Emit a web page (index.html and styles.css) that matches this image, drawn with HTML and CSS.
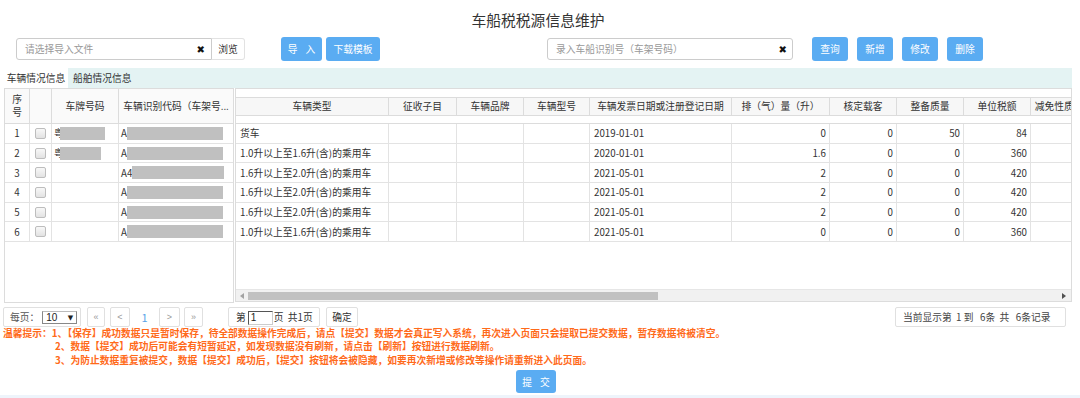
FILE: index.html
```html
<!DOCTYPE html>
<html lang="zh-CN">
<head>
    <meta charset="UTF-8">
    <meta name="viewport" content="width=device-width, initial-scale=1.0">
    <title>车船税税源信息维护</title>
    <link rel="stylesheet" href="styles.css">
</head>
<body>
    <div class="page">
        <h1 class="title">车船税税源信息维护</h1>

        <div class="toolbar">
            <div class="file-box">
                <div class="field file-field">
                    <span class="placeholder">请选择导入文件</span>
                    <span class="clear">&#10006;</span>
                </div>
                <span class="browse">浏览</span>
            </div>
            <button class="btn btn-import">导 入</button>
            <button class="btn btn-template">下载模板</button>

            <div class="field search-field">
                <span class="placeholder">录入车船识别号（车架号码）</span>
                <span class="clear">&#10006;</span>
            </div>
            <button class="btn btn-action btn-first">查询</button>
            <button class="btn btn-action">新增</button>
            <button class="btn btn-action">修改</button>
            <button class="btn btn-action">删除</button>
        </div>

        <div class="tabs">
            <span class="tab active">车辆情况信息</span>
            <span class="tab">船舶情况信息</span>
        </div>

        <div class="grid">
            <!-- frozen columns -->
            <div class="frozen">
                <div class="frozen-head">
                    <div class="hcell seq">序<br>号</div>
                    <div class="hcell"></div>
                    <div class="hcell">车牌号码</div>
                    <div class="hcell last">车辆识别代码（车架号...</div>
                </div>
                <div class="frozen-body">
                    <div class="cell seq">1</div>
                    <div class="cell"><span class="check"></span></div>
                    <div class="cell plate"><span class="cut">粤</span><span class="mask mask-plate1"></span></div>
                    <div class="cell vin last"><span class="cut">A</span><span class="mask"></span></div>

                    <div class="cell seq">2</div>
                    <div class="cell"><span class="check"></span></div>
                    <div class="cell plate"><span class="cut">粤</span><span class="mask mask-plate2"></span></div>
                    <div class="cell vin last"><span class="cut">A</span><span class="mask"></span></div>

                    <div class="cell seq">3</div>
                    <div class="cell"><span class="check"></span></div>
                    <div class="cell plate"></div>
                    <div class="cell vin last"><span class="cut">A4</span><span class="mask mask-short"></span></div>

                    <div class="cell seq">4</div>
                    <div class="cell"><span class="check"></span></div>
                    <div class="cell plate"></div>
                    <div class="cell vin last"><span class="cut">A</span><span class="mask"></span></div>

                    <div class="cell seq">5</div>
                    <div class="cell"><span class="check"></span></div>
                    <div class="cell plate"></div>
                    <div class="cell vin last"><span class="cut">A</span><span class="mask"></span></div>

                    <div class="cell seq">6</div>
                    <div class="cell"><span class="check"></span></div>
                    <div class="cell plate"></div>
                    <div class="cell vin last"><span class="cut">A</span><span class="mask"></span></div>
                </div>
            </div>

            <!-- scrolling columns -->
            <div class="main">
                <div class="main-inner">
                    <div class="main-head">
                        <div class="hcell">车辆类型</div>
                        <div class="hcell">征收子目</div>
                        <div class="hcell">车辆品牌</div>
                        <div class="hcell">车辆型号</div>
                        <div class="hcell">车辆发票日期或注册登记日期</div>
                        <div class="hcell">排（气）量（升）</div>
                        <div class="hcell">核定载客</div>
                        <div class="hcell">整备质量</div>
                        <div class="hcell">单位税额</div>
                        <div class="hcell">减免性质代码</div>
                    </div>
                    <div class="main-body" id="main-body"></div>
                </div>
                <div class="hscroll">
                    <span class="arrow-left"></span>
                    <span class="thumb"></span>
                    <span class="arrow-right"></span>
                </div>
            </div>
        </div>

        <div class="pager">
            <div class="box per-page">每页：<span class="select">10<span class="caret">&#9660;</span></span></div>
            <span class="box nav nav-first">&laquo;</span>
            <span class="box nav nav-prev">&lt;</span>
            <span class="current">1</span>
            <span class="box nav nav-next">&gt;</span>
            <span class="box nav nav-last">&raquo;</span>
            <div class="box goto">第<span class="page-input">1</span>页&nbsp;&nbsp;共1页</div>
            <span class="box confirm">确定</span>
            <div class="box info">当前显示第&nbsp;&nbsp;1 到&nbsp;&nbsp;&nbsp;6条&nbsp;&nbsp;共&nbsp;&nbsp;&nbsp;6条记录</div>
        </div>

        <div class="notice">
            <p>温馨提示：1、【保存】成功数据只是暂时保存，待全部数据操作完成后，请点【提交】数据才会真正写入系统，再次进入页面只会提取已提交数据，暂存数据将被清空。</p>
            <p class="indent">2、数据【提交】成功后可能会有短暂延迟，如发现数据没有刷新，请点击【刷新】按钮进行数据刷新。</p>
            <p class="indent">3、为防止数据重复被提交，数据【提交】成功后，【提交】按钮将会被隐藏，如要再次新增或修改等操作请重新进入此页面。</p>
        </div>

        <div class="submit-row">
            <button class="btn btn-submit">提 交</button>
        </div>
        <div class="footer-strip"></div>
    </div>

    <script>
        var rows = [
            ['货车', '2019-01-01', '0', '0', '50', '84'],
            ['1.0升以上至1.6升(含)的乘用车', '2020-01-01', '1.6', '0', '0', '360'],
            ['1.6升以上至2.0升(含)的乘用车', '2021-05-01', '2', '0', '0', '420'],
            ['1.6升以上至2.0升(含)的乘用车', '2021-05-01', '2', '0', '0', '420'],
            ['1.6升以上至2.0升(含)的乘用车', '2021-05-01', '2', '0', '0', '420'],
            ['1.0升以上至1.6升(含)的乘用车', '2021-05-01', '0', '0', '0', '360']
        ];
        var body = document.getElementById('main-body');
        var html = '';
        rows.forEach(function(r) {
            html += '<div class="cell">' + r[0] + '</div>';
            html += '<div class="cell"></div><div class="cell"></div><div class="cell"></div>';
            html += '<div class="cell">' + r[1] + '</div>';
            html += '<div class="cell num">' + r[2] + '</div>';
            html += '<div class="cell num">' + r[3] + '</div>';
            html += '<div class="cell num">' + r[4] + '</div>';
            html += '<div class="cell num">' + r[5] + '</div>';
            html += '<div class="cell"></div>';
        });
        body.innerHTML = html;
    </script>
</body>
</html>
```

FILE: styles.css
```css
* {
    box-sizing: border-box;
}
body {
    margin: 0;
    background-color: #fff;
    font-family: "Noto Sans CJK SC", "Noto Sans", sans-serif;
    font-size: 9.75px;
    color: #333;
}
.page {
    width: 1080px;
    height: 398px;
    overflow: hidden;
}
.title {
    margin: 0;
    height: 37px;
    padding: 10px 4px 0 0;
    line-height: 20px;
    font-size: 14.8px;
    font-weight: normal;
    text-align: center;
    color: #333;
}

/* toolbar */
.toolbar {
    display: flex;
    align-items: center;
    height: 24px;
    padding-left: 16px;
}
.file-box {
    display: flex;
    width: 229px;
    height: 22px;
}
.field {
    display: flex;
    align-items: center;
    height: 22px;
    padding-left: 8px;
    border: 1px solid #ccc;
    border-radius: 3px;
    background: #fff;
}
.placeholder {
    color: #999;
}
.clear {
    margin-left: auto;
    font-family: "DejaVu Sans", sans-serif;
    font-size: 10px;
    color: #111;
}
.file-field {
    width: 196px;
    border-radius: 3px 0 0 3px;
}
.file-field .clear {
    margin-right: 6px;
}
.browse {
    display: flex;
    align-items: center;
    justify-content: center;
    width: 33px;
    border: 1px solid #e2e2e2;
    border-left: none;
    border-radius: 0 3px 3px 0;
    color: #333;
}
.search-field {
    width: 246px;
    margin-left: 167px;
}
.search-field .clear {
    margin-right: 5px;
}
.btn {
    height: 24px;
    padding: 0;
    border: none;
    border-radius: 3px;
    background-color: #5aacf2;
    color: #fff;
    font-family: inherit;
    font-size: 9.75px;
}
.btn-import {
    width: 41px;
    margin-left: 36px;
    letter-spacing: 3px;
    text-indent: 3px;
}
.btn-template {
    width: 54px;
    margin-left: 4px;
}
.btn-action {
    width: 36px;
    margin-left: 9px;
}
.btn-first {
    margin-left: 19px;
}

/* tabs */
.tabs {
    display: flex;
    height: 20px;
    margin: 7px 8px 0 4px;
    background-color: #e4f3f3;
    line-height: 20px;
}
.tab {
    color: #333;
}
.tab.active {
    width: 64px;
    background-color: #fff;
    text-align: center;
}
.tab + .tab {
    margin-left: 5px;
}

/* grid */
.grid {
    display: flex;
    padding-left: 4px;
}
.frozen {
    width: 230px;
    height: 215px;
    border: 1px solid #dcdcdc;
}
.frozen-head,
.frozen-body {
    display: grid;
    grid-template-columns: 25px 22px 67px 114px;
}
.frozen-head {
    height: 35px;
    background-color: #fafafa;
    border-bottom: 1px solid #dcdcdc;
}
.frozen-body {
    grid-auto-rows: 19.7px;
}
.hcell {
    display: flex;
    align-items: center;
    justify-content: center;
    border-right: 1px solid #dcdcdc;
    white-space: nowrap;
    overflow: hidden;
    text-align: center;
    line-height: 13px;
}
.hcell.last,
.cell.last {
    border-right: none;
}
.cell {
    display: flex;
    align-items: center;
    padding-left: 4px;
    border-right: 1px solid #e3e3e3;
    border-bottom: 1px solid #e3e3e3;
    white-space: nowrap;
    overflow: hidden;
}
.cell.seq {
    justify-content: center;
    padding-left: 0;
}
.frozen-body .cell:nth-child(4n+2) {
    justify-content: center;
    padding-left: 0;
}
.check {
    width: 11px;
    height: 11px;
    border: 1px solid #bdbdbd;
    border-radius: 2px;
    background: linear-gradient(#f8f8f8, #e2e2e2);
}
.cut {
    flex: none;
}
.plate,
.vin {
    padding-left: 2px;
}
.mask {
    position: relative;
    width: 96px;
    height: 13px;
    background-color: #c0c0c0;
}
.mask-short {
    width: 92px;
}
.plate .mask {
    margin-left: -4px;
}
.mask-plate1 {
    width: 45px;
}
.mask-plate2 {
    width: 41px;
}

.main {
    position: relative;
    width: 837px;
    height: 214px;
    margin-left: 1px;
    border: 1px solid #dcdcdc;
    overflow: hidden;
}
.main-inner {
    width: 862px;
    padding-top: 8px;
}
.main-head,
.main-body {
    display: grid;
    grid-template-columns: 153px 68px 67px 66px 142px 98px 67px 67px 67px 67px;
}
.main-head {
    height: 19px;
    border-top: 1px solid #dcdcdc;
    border-bottom: 1px solid #dcdcdc;
    background-color: #f7f7f7;
}
.main-body {
    margin-top: 7px;
    border-top: 1px solid #dcdcdc;
    grid-auto-rows: 19.7px;
}
.cell.num {
    justify-content: flex-end;
    padding-left: 0;
    padding-right: 3px;
}
.hscroll {
    position: absolute;
    left: 0;
    right: 0;
    bottom: 0;
    height: 12px;
    background-color: #f1f1f1;
    border-top: 1px solid #e6e6e6;
}
.thumb {
    position: absolute;
    left: 12px;
    top: 2px;
    width: 410px;
    height: 8px;
    background-color: #c1c1c1;
}
.arrow-left,
.arrow-right {
    position: absolute;
    top: 3px;
    width: 0;
    height: 0;
    border-top: 3px solid transparent;
    border-bottom: 3px solid transparent;
}
.arrow-left {
    left: 4px;
    border-right: 4px solid #a3a3a3;
}
.arrow-right {
    right: 5px;
    border-left: 4px solid #505050;
}

/* pager */
.pager {
    display: flex;
    align-items: center;
    height: 20px;
    margin-top: 4px;
    padding-left: 3px;
    color: #555;
}
.box {
    display: flex;
    align-items: center;
    height: 20px;
    border: 1px solid #e0e0e0;
    border-radius: 2px;
    background-color: #fff;
}
.per-page {
    width: 78px;
    padding-left: 6px;
}
.select {
    position: relative;
    width: 35px;
    height: 13px;
    margin-left: 3px;
    padding-left: 3px;
    border: 1px solid #888;
    border-top-color: #bbb;
    line-height: 12px;
    color: #222;
    font-family: "Liberation Sans", sans-serif;
    font-size: 10px;
}
.caret {
    position: absolute;
    right: 3px;
    top: 0;
    font-size: 7px;
    font-family: "DejaVu Sans", sans-serif;
}
.nav {
    justify-content: center;
    color: #999;
    font-family: "Liberation Sans", sans-serif;
    font-size: 9px;
}
.nav-first {
    width: 18px;
    margin-left: 6px;
}
.nav-prev {
    width: 20px;
    margin-left: 5px;
}
.current {
    width: 29px;
    text-align: center;
    color: #5aa3e8;
    font-size: 11px;
}
.nav-next {
    width: 21px;
}
.nav-last {
    width: 19px;
    margin-left: 4px;
}
.goto {
    width: 92px;
    margin-left: 25px;
    padding-left: 7px;
    color: #333;
}
.page-input {
    width: 25px;
    height: 14px;
    margin: 2px 1px 0 2px;
    padding-left: 2px;
    border: 1px solid #555;
    border-right-color: #ccc;
    border-bottom-color: #ccc;
    line-height: 12px;
    font-family: "Liberation Sans", sans-serif;
    font-size: 10px;
    color: #222;
}
.confirm {
    justify-content: center;
    width: 32px;
    margin-left: 6px;
    color: #333;
}
.info {
    width: 171px;
    margin-left: auto;
    margin-right: 14px;
    padding-left: 7px;
    color: #444;
}

/* notice */
.notice {
    color: #ff6a1a;
    font-weight: bold;
    line-height: 13.4px;
}
.notice p {
    margin: 0;
    padding-left: 3px;
    white-space: nowrap;
}
.notice p.indent {
    padding-left: 55px;
}
.submit-row {
    display: flex;
    justify-content: center;
    margin-top: 3px;
    padding-right: 8px;
}
.btn-submit {
    width: 40px;
    height: 23px;
    letter-spacing: 3px;
    text-indent: 3px;
}
.footer-strip {
    height: 4px;
    margin-top: 2px;
    background-color: #eef4fb;
}
```
